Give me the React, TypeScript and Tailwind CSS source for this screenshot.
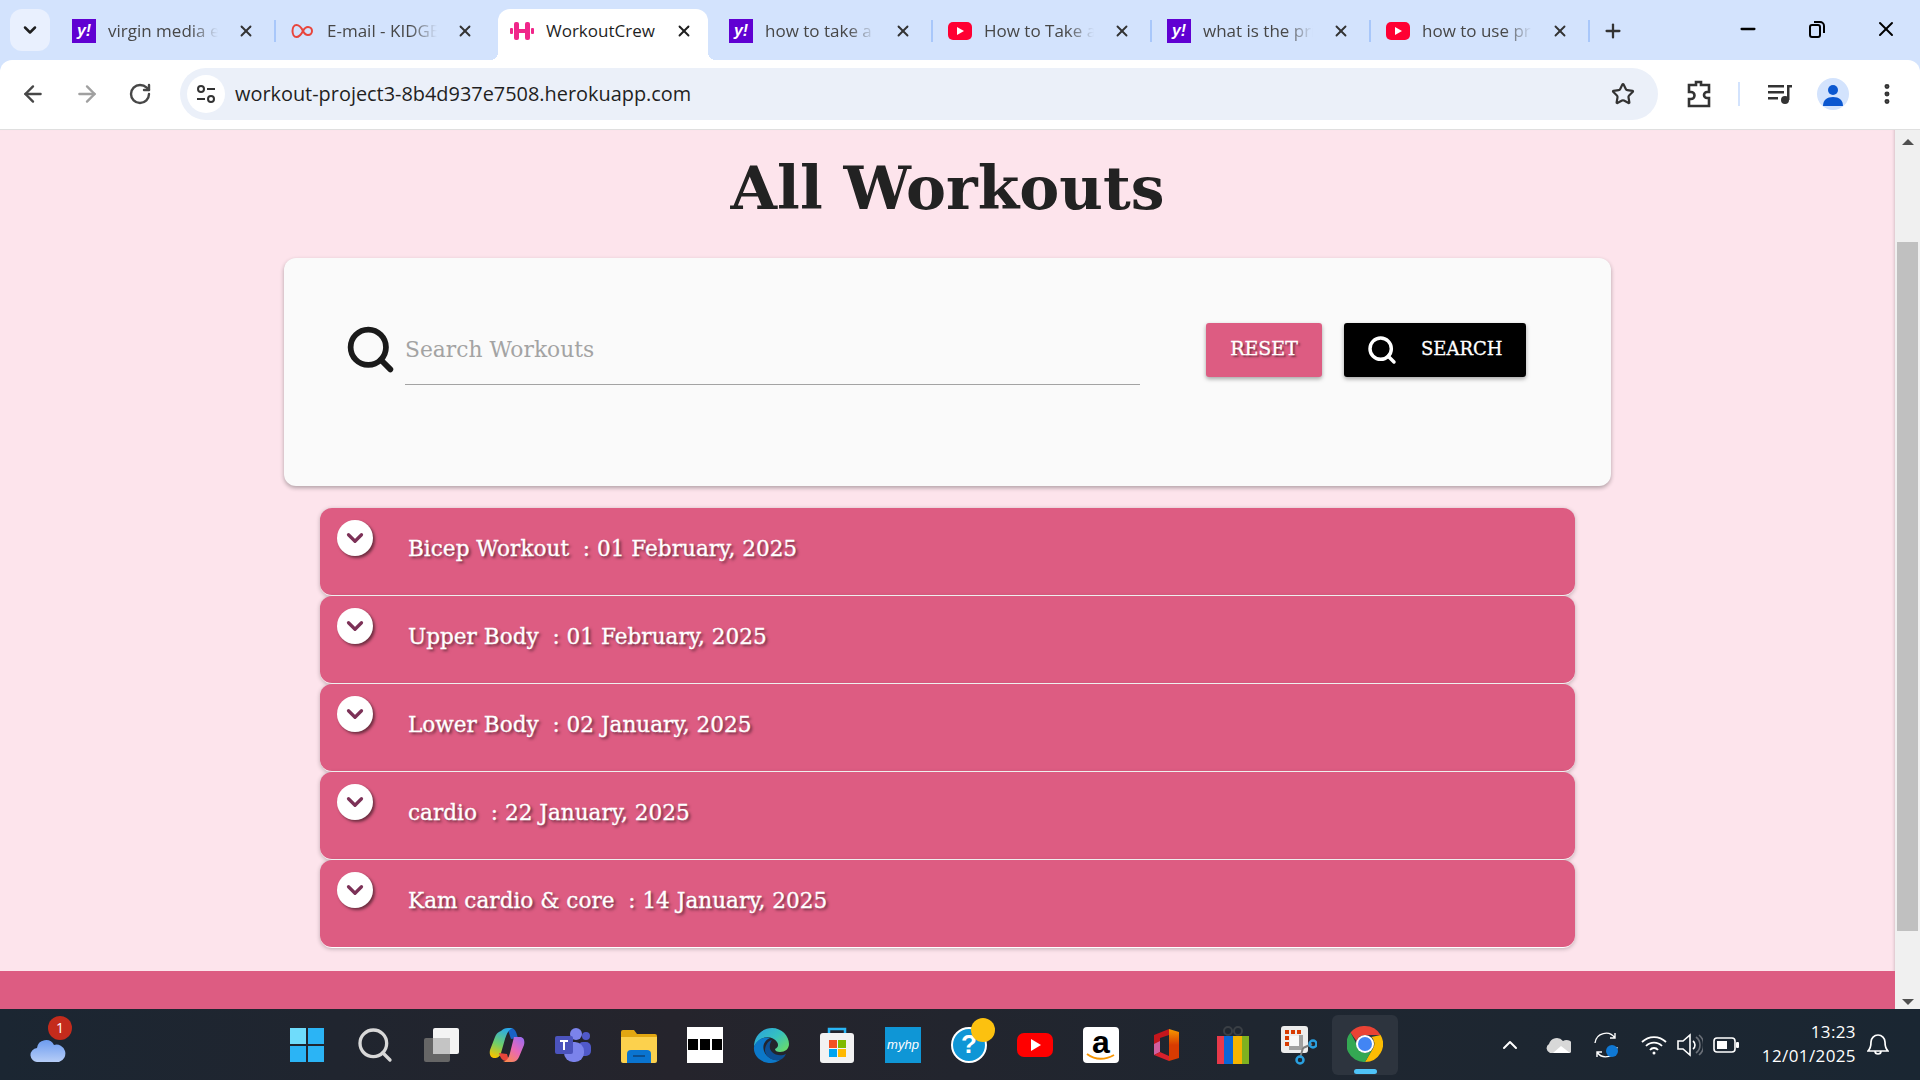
import { ReactNode } from 'react';
import { ArrowLeft, ArrowRight, ChevronDown, ChevronUp, Minus, MoreVertical, Plus, RotateCw, Search, Star, X } from 'lucide-react';

const Yahoo = () => (
  <span className="flex h-6 w-6 shrink-0 items-center justify-center bg-[#6001d2] font-['Liberation_Sans',sans-serif] text-[16px] font-bold italic leading-none text-white">
    y!
  </span>
);

const YouTube = () => (
  <span className="flex h-[18px] w-6 shrink-0 items-center justify-center rounded-[5px] bg-[#ff0033]">
    <span className="ml-px h-0 w-0 border-y-[4px] border-l-[7px] border-y-transparent border-l-white" />
  </span>
);

const Virgin = () => (
  <svg width="24" height="24" viewBox="0 0 24 24" fill="none" stroke="#e8453c" strokeWidth="2" className="shrink-0">
    <path d="M12 12c-2-4-4-6-6.500-6C3 6 1.500 9 1.500 12s1.500 6 4 6c2.500 0 4.500-2 6.500-6 1.500-3 3-4 5-4 2.500 0 4 2 4 4s-1.500 4-4 4c-2 0-3.500-1-5-4z" />
  </svg>
);

const Dumbbell = () => (
  <svg width="24" height="24" viewBox="0 0 24 24" fill="#f0268a" className="shrink-0">
    <rect x="0" y="9" width="3" height="6" rx="1" />
    <rect x="4" y="3" width="5" height="18" rx="2" />
    <rect x="9" y="10" width="6" height="4" />
    <rect x="15" y="3" width="5" height="18" rx="2" />
    <rect x="21" y="9" width="3" height="6" rx="1" />
  </svg>
);

const tabs = [
  { title: 'virgin media email', icon: <Yahoo />, sep: true },
  { title: 'E-mail - KIDGE', icon: <Virgin />, sep: false },
  { title: 'WorkoutCrew', icon: <Dumbbell />, active: true, sep: false },
  { title: 'how to take a screenshot', icon: <Yahoo />, sep: true },
  { title: 'How to Take a Screenshot', icon: <YouTube />, sep: true },
  { title: 'what is the price', icon: <Yahoo />, sep: true },
  { title: 'how to use print', icon: <YouTube />, sep: true },
];

const workouts = [
  'Bicep Workout  : 01 February, 2025',
  'Upper Body  : 01 February, 2025',
  'Lower Body  : 02 January, 2025',
  'cardio  : 22 January, 2025',
  'Kam cardio & core  : 14 January, 2025',
];

const TabStrip = () => (
  <div className="flex h-[60px] shrink-0 items-end bg-[#d3e3fd]">
    <div className="mb-[9px] ml-[10px] mr-[10px] flex h-[42px] w-[40px] items-center justify-center rounded-[12px] bg-[#e9f0fe]">
      <ChevronDown size={20} strokeWidth={3} className="text-[#1f1f1f]" />
    </div>
    {tabs.map((tab) =>
      tab.active ? (
        <div key={tab.title} className="relative mr-[9px] flex h-[51px] w-[210px] items-center rounded-t-[12px] bg-white pb-[7px] pl-3 pr-[15px] text-[#1f1f1f]">
          <span className="absolute -right-2 bottom-0 h-2 w-2 bg-[radial-gradient(circle_at_100%_0,transparent_8px,white_8px)]" />
          <span className="absolute -left-2 bottom-0 h-2 w-2 bg-[radial-gradient(circle_at_0_0,transparent_8px,white_8px)]" />
          {tab.icon}
          <span className="ml-3 flex-1 whitespace-nowrap text-[17px]">{tab.title}</span>
          <X size={18} strokeWidth={2.5} />
        </div>
      ) : (
        <div key={tab.title} className="flex h-[50px] w-[219px] items-center pb-[8px] pl-3 text-[#474747]">
          {tab.icon}
          <span className="ml-3 w-[110px] overflow-hidden whitespace-nowrap text-[17px] [mask-image:linear-gradient(to_right,black_75%,transparent)]">
            {tab.title}
          </span>
          <X size={18} strokeWidth={2.5} className="ml-[19px] text-[#333333]" />
          <span className={`ml-[19px] h-[22px] w-[2px] ${tab.sep ? 'bg-[#a8c7fa]' : 'bg-transparent'}`} />
        </div>
      ),
    )}
    <div className="mb-[15px] flex h-[28px] w-[40px] items-center justify-center">
      <Plus size={22} strokeWidth={2.5} className="text-[#333333]" />
    </div>
    <div className="mb-[19px] ml-auto flex items-center text-black">
      <Minus size={22} strokeWidth={2.5} className="mr-[48px]" />
      <svg width="20" height="20" viewBox="0 0 20 20" fill="none" stroke="currentColor" strokeWidth="2" className="mr-[47px]">
        <rect x="3" y="6" width="10" height="12" rx="2" />
        <path d="M7 3h6a4 4 0 0 1 4 4v7" />
      </svg>
      <X size={24} strokeWidth={2} className="mr-[22px]" />
    </div>
  </div>
);

const Toolbar = () => (
  <div className="flex h-[70px] shrink-0 items-center rounded-t-[12px] border-b border-[#dfdfdf] bg-white pb-px">
    <div className="flex items-center gap-[28px] pl-[20px] pr-[28px] text-[#474747]">
      <ArrowLeft size={26} strokeWidth={2.2} />
      <ArrowRight size={26} strokeWidth={2.2} className="text-[#a0a0a0]" />
      <RotateCw size={24} strokeWidth={2.4} />
    </div>
    <div className="flex h-[52px] w-[1478px] items-center rounded-full bg-[#ebf0f9] pl-[7px] pr-[23px]">
      <span className="flex h-[38px] w-[38px] items-center justify-center rounded-full bg-white">
        <svg width="22" height="22" viewBox="0 0 22 22" fill="none" stroke="#333333" strokeWidth="2">
          <circle cx="6" cy="6" r="3" />
          <path d="M12 6h8M2 16h8" />
          <circle cx="16" cy="16" r="3" />
        </svg>
      </span>
      <span className="ml-[10px] flex-1 text-[19.900px] text-[#1f1f1f]">workout-project3-8b4d937e7508.herokuapp.com</span>
      <Star size={24} strokeWidth={2.2} className="text-[#333333]" />
    </div>
    <svg width="26" height="30" viewBox="0 0 26 30" fill="none" stroke="#333333" strokeWidth="2.6" className="ml-[28px]">
      <path d="M3 6h7V3h5v3h8v7h-2a3 3 0 0 0 0 6h2v8H3v-7h2a3.500 3.500 0 0 0 0-7H3z" />
    </svg>
    <span className="ml-[26px] h-[24px] w-[2px] bg-[#d3e3fd]" />
    <svg width="26" height="22" viewBox="0 0 26 22" className="ml-[27px]" fill="#333333">
      <rect x="1" y="2" width="16" height="2.500" />
      <rect x="1" y="8" width="16" height="2.500" />
      <rect x="1" y="14" width="10" height="2.500" />
      <rect x="20" y="2" width="2.500" height="15" />
      <rect x="20" y="2" width="5" height="2.500" />
      <circle cx="18" cy="17" r="4" />
    </svg>
    <span className="ml-[24px] flex h-[32px] w-[32px] items-center justify-center overflow-hidden rounded-full bg-[#d3e3fd]">
      <svg width="22" height="24" viewBox="0 0 22 24" fill="#0b57d0">
        <circle cx="11" cy="8" r="5" />
        <path d="M1 24c0-6 4-9 10-9s10 3 10 9z" />
      </svg>
    </span>
    <MoreVertical size={26} strokeWidth={2.6} className="ml-[25px] text-[#333333]" />
  </div>
);

const WorkoutRow = ({ text }: { text: string }) => (
  <div className="flex h-[88px] items-start rounded-[12px] border-b border-white bg-[#dd5c82] pl-[17px] shadow-[0_1px_4px_rgba(0,0,0,0.25)]">
    <span className="mt-3 flex h-[36px] w-[36px] items-center justify-center rounded-full bg-white shadow-[2px_2px_3px_rgba(0,0,0,0.5)]">
      <ChevronDown size={26} strokeWidth={3} className="text-[#7c3157]" />
    </span>
    <span className="ml-[35px] mt-[27px] whitespace-pre font-['DejaVu_Serif',serif] text-[21.600px] leading-[28px] text-white [-webkit-text-stroke:0.3px_white] [text-shadow:2px_2px_3px_rgba(0,0,0,0.55)]">
      {text}
    </span>
  </div>
);

const Page = () => (
  <div className="flex min-h-0 flex-1">
    <div className="flex flex-1 flex-col items-center bg-[#fde4ec] shadow-[inset_-3px_0_3px_-2px_rgba(0,0,0,0.15)]">
      <h1 className="mt-[24px] h-[104px] font-['DejaVu_Serif',serif] text-[60px] font-bold leading-[68px] text-[#222222]">All Workouts</h1>
      <div className="flex h-[228px] w-[1327px] items-start rounded-[12px] bg-[#fafafa] pl-[60px] pr-[85px] pt-[65px] shadow-[0_2px_4px_rgba(0,0,0,0.3)]">
        <Search size={53} strokeWidth={2.6} className="shrink-0 text-[#1a1a1a]" />
        <input
          placeholder="Search Workouts"
          className="ml-[8px] mt-[3px] h-[59px] w-[735px] border-b border-[#a3a3a3] bg-transparent pb-[11px] font-['DejaVu_Serif',serif] text-[21.800px] outline-none placeholder:text-[#a3a3a3]"
        />
        <button className="ml-[66px] h-[54px] w-[116px] rounded-[3px] bg-[#dd5c82] pb-[4px] font-['DejaVu_Serif',serif] text-[19px] text-white shadow-[0_2px_4px_rgba(0,0,0,0.35)] [-webkit-text-stroke:0.3px_white] [text-shadow:2px_2px_2px_rgba(0,0,0,0.5)]">
          RESET
        </button>
        <button className="ml-[22px] flex h-[54px] w-[182px] items-center rounded-[3px] bg-black pl-[22px] font-['DejaVu_Serif',serif] text-[18px] text-white shadow-[0_2px_4px_rgba(0,0,0,0.35)] [-webkit-text-stroke:0.3px_white]">
          <Search size={32} strokeWidth={2.6} />
          <span className="mb-[4px] ml-[23px]">SEARCH</span>
        </button>
      </div>
      <div className="mt-[22px] flex w-[1255px] flex-col">
        {workouts.map((w) => (
          <WorkoutRow key={w} text={w} />
        ))}
      </div>
      <div className="mt-auto h-[38px] w-full bg-[#dd5c82]" />
    </div>
    <div className="flex w-[25px] shrink-0 flex-col items-center bg-[#f0f0f0]">
      <span className="mt-[9px] h-0 w-0 border-x-[6px] border-b-[6px] border-x-transparent border-b-[#505050]" />
      <span className="mt-[97px] h-[689px] w-[21px] bg-[#c0c0c0]" />
      <span className="mt-[68px] h-0 w-0 border-x-[6px] border-t-[6px] border-x-transparent border-t-[#505050]" />
    </div>
  </div>
);

const Slot = ({ children, active }: { children: ReactNode; active?: boolean }) => (
  <div className={`relative flex h-[60px] w-[66px] items-center justify-center rounded-[6px] ${active ? 'bg-[#2d343e]' : ''}`}>
    {children}
    {active && <span className="absolute bottom-[1px] h-[5px] w-[23px] rounded-full bg-[#4fc3f7]" />}
  </div>
);

const Taskbar = () => (
  <div className="flex h-[71px] shrink-0 items-center bg-[linear-gradient(90deg,#1b2632,#25242c_35%,#1f2630_65%,#1a2632)] text-white">
    <div className="relative ml-[30px] w-[246px]">
      <svg width="36" height="26" viewBox="0 0 36 26" className="mt-[8px]">
        <defs>
          <linearGradient id="wx" x1="0" y1="0" x2="0" y2="1">
            <stop offset="0" stopColor="#6d9cf0" />
            <stop offset="1" stopColor="#b6cdf7" />
          </linearGradient>
        </defs>
        <path d="M8 26a7 7 0 0 1-1-14 9 9 0 0 1 17-3 8 8 0 0 1 5 17z" fill="url(#wx)" />
      </svg>
      <span className="absolute left-[18px] top-[-12px] flex h-[24px] w-[24px] items-center justify-center rounded-full bg-[#c42b1c] font-['Open_Sans',sans-serif] text-[14px]">1</span>
    </div>
    <div className="flex items-center">
      <Slot>
        <svg width="36" height="36" viewBox="0 0 36 36" className="-ml-[4px]">
          <path d="M1 1h16v16H1zM19 1h16v16H19zM1 19h16v16H1zM19 19h16v16H19z" fill="#2bb4f5" />
          <path d="M1 1h16v16H1z" fill="#6fdcfb" />
        </svg>
      </Slot>
      <Slot>
        <Search size={40} strokeWidth={2} className="text-[#d8d8d8]" />
      </Slot>
      <Slot>
        <svg width="36" height="36" viewBox="0 0 36 36">
          <rect x="10" y="1" width="26" height="26" rx="2" fill="#f4f4f4" />
          <rect x="1" y="11" width="26" height="24" rx="2" fill="#666666" />
          <rect x="10" y="11" width="17" height="16" fill="#c4c4c4" />
        </svg>
      </Slot>
      <Slot>
        <svg width="36" height="36" viewBox="0 0 36 36">
          <defs>
            <linearGradient id="cp1" x1="0.6" y1="0" x2="0.3" y2="1">
              <stop offset="0" stopColor="#2aa7e8" />
              <stop offset="0.55" stopColor="#6fd06a" />
              <stop offset="1" stopColor="#f5c400" />
            </linearGradient>
            <linearGradient id="cp2" x1="0.9" y1="0" x2="0.2" y2="1">
              <stop offset="0" stopColor="#9a6cf0" />
              <stop offset="0.5" stopColor="#e868b8" />
              <stop offset="1" stopColor="#fb8a50" />
            </linearGradient>
          </defs>
          <path d="M19 1h3c3 0 5 3 6 7l1 3-7 1-3-9z" fill="#1a62c4" />
          <path d="M12 4c2-2 4-3 7-3h5c-4 1-6 5-8 11l-4 14c-1 4-4 5-6 5-4 0-6-3-5-8L6 10c1-3 3-5 6-6z" fill="url(#cp1)" />
          <path d="M10 26l8 1 2 7h-3c-3 0-6-3-7-8z" fill="#e8463a" />
          <path d="M25 10h6c4 0 5 4 4 8l-5 12c-1 3-4 5-7 5h-9c4-1 6-5 7-9z" fill="url(#cp2)" />
        </svg>
      </Slot>
      <Slot>
        <svg width="38" height="36" viewBox="0 0 38 36">
          <circle cx="22" cy="7" r="6" fill="#7b83eb" />
          <circle cx="32" cy="9" r="4" fill="#5059c9" />
          <rect x="24" y="15" width="13" height="14" rx="5" fill="#5059c9" />
          <rect x="10" y="15" width="20" height="20" rx="9" fill="#7b83eb" />
          <rect x="1" y="9" width="18" height="18" rx="2" fill="#4b53bc" />
          <path d="M6 13h8v2h-3v8H9v-8H6z" fill="#ffffff" />
        </svg>
      </Slot>
      <Slot>
        <svg width="36" height="36" viewBox="0 0 36 36">
          <path d="M0 5a2 2 0 0 1 2-2h11l3 4h18a2 2 0 0 1 2 2v25H0z" fill="#e2a712" />
          <path d="M0 10h36v24a2 2 0 0 1-2 2H2a2 2 0 0 1-2-2z" fill="#fcd14d" />
          <path d="M6 36v-9a4 4 0 0 1 4-4h16a4 4 0 0 1 4 4v9z" fill="#0a74d0" />
          <rect x="12" y="28" width="12" height="2" fill="#0c4f8f" />
        </svg>
      </Slot>
      <Slot>
        <div className="flex h-[36px] w-[36px] items-center justify-center gap-[2px] bg-white">
          <span className="h-[11px] w-[10px] bg-black" />
          <span className="h-[11px] w-[10px] bg-black" />
          <span className="h-[11px] w-[10px] bg-black" />
        </div>
      </Slot>
      <Slot>
        <svg width="36" height="36" viewBox="0 0 36 36">
          <defs>
            <linearGradient id="edge" x1="0" y1="0" x2="1" y2="0.8">
              <stop offset="0" stopColor="#2a9fe0" />
              <stop offset="0.55" stopColor="#35c1c0" />
              <stop offset="1" stopColor="#68d96b" />
            </linearGradient>
          </defs>
          <path d="M1 20C1 8 10 1 19 1c10 0 17 8 17 16 0 5-4 8-9 8-3 0-5-1-5-3 3-1 4-4 2-7-3-5-11-6-16-3-3 2-6 5-7 8z" fill="url(#edge)" />
          <path d="M1 20c2-7 10-11 16-9-5 2-8 7-6 13 2 6 9 10 16 9-3 2-6 3-9 3C8 36 0 29 1 20z" fill="#0c78c9" />
          <path d="M12 24c0-6 3-10 7-11-3 4-3 9 0 12 4 4 10 4 14 2-2 4-5 6-7 6-7 1-13-3-14-9z" fill="#0d4f94" />
        </svg>
      </Slot>
      <Slot>
        <svg width="36" height="36" viewBox="0 0 36 36">
          <path d="M10 7V2h16v5" fill="none" stroke="#29b6f6" strokeWidth="2.500" />
          <rect x="1" y="6" width="34" height="30" rx="3" fill="#f2f2f2" />
          <rect x="10" y="13" width="8" height="8" fill="#f25022" />
          <rect x="19" y="13" width="8" height="8" fill="#7fba00" />
          <rect x="10" y="22" width="8" height="8" fill="#00a4ef" />
          <rect x="19" y="22" width="8" height="8" fill="#ffb900" />
        </svg>
      </Slot>
      <Slot>
        <div className="flex h-[36px] w-[36px] items-center justify-center bg-[#0f96d6] font-['Liberation_Sans',sans-serif] text-[13px] italic text-white">myhp</div>
      </Slot>
      <Slot>
        <div className="relative flex h-[36px] w-[36px] items-center justify-center rounded-full border-2 border-white bg-[#0f96d6] font-['Liberation_Sans',sans-serif] text-[26px] font-bold text-white">
          ?
          <span className="absolute -right-[10px] -top-[11px] h-[24px] w-[24px] rounded-full bg-[#fcc10f]" />
        </div>
      </Slot>
      <Slot>
        <span className="flex h-[24px] w-[36px] items-center justify-center rounded-[7px] bg-[#ff0000]">
          <span className="ml-px h-0 w-0 border-y-[6px] border-l-[10px] border-y-transparent border-l-white" />
        </span>
      </Slot>
      <Slot>
        <div className="relative flex h-[36px] w-[36px] items-start justify-center rounded-[4px] bg-white font-['Liberation_Sans',sans-serif] text-[32px] font-bold leading-[30px] text-black">
          a
          <svg width="30" height="10" viewBox="0 0 30 10" fill="none" stroke="#f79400" strokeWidth="2" className="absolute bottom-[1px] left-[3px]">
            <path d="M1 2c8 6 18 6 27 1" />
          </svg>
        </div>
      </Slot>
      <Slot>
        <svg width="30" height="36" viewBox="0 0 30 36">
          <defs>
            <linearGradient id="off" x1="0" y1="0" x2="0" y2="1">
              <stop offset="0" stopColor="#f59a00" />
              <stop offset="0.5" stopColor="#d83b01" />
            </linearGradient>
          </defs>
          <path d="M17 2l10 3v26l-10 3z" fill="url(#off)" />
          <path d="M2 8l15-6v6L8 11v14l-6 3z" fill="#c4161c" />
          <path d="M2 17l6-3v11l-6 3z" fill="#d0609f" />
          <path d="M2 28l6-3 9 4v5z" fill="#d8202c" />
        </svg>
      </Slot>
      <Slot>
        <svg width="32" height="38" viewBox="0 0 32 38">
          <circle cx="11" cy="5" r="4" fill="none" stroke="#3a3f45" strokeWidth="2" />
          <circle cx="21" cy="5" r="4" fill="none" stroke="#3a3f45" strokeWidth="2" />
          <rect x="0" y="10" width="7" height="28" fill="#e8394a" />
          <rect x="7" y="10" width="9" height="28" fill="#0a66d6" />
          <rect x="16" y="10" width="9" height="28" fill="#f4b400" />
          <rect x="25" y="10" width="7" height="28" fill="#7fb11f" />
        </svg>
      </Slot>
      <Slot>
        <svg width="36" height="40" viewBox="0 0 36 40">
          <rect x="0" y="1" width="27" height="27" rx="3" fill="#ececec" />
          <path d="M4 5h4v4H4zM10 5h4v4h-4zM16 5h4v4h-4zM4 11h4v4H4zM4 17h4v4H4z" fill="#d83b01" />
          <path d="M9 11h11v11H9z" fill="#f8f8f8" />
          <path d="M8 23h14M20 10v14" stroke="#a0a0a0" strokeWidth="4" fill="none" />
          <path d="M22 23l9-4M22 23l-3 10" stroke="#7c7c7c" strokeWidth="2" fill="none" />
          <circle cx="32" cy="19" r="3.500" fill="none" stroke="#29a0e0" strokeWidth="2.500" />
          <circle cx="19" cy="35" r="3.500" fill="none" stroke="#29a0e0" strokeWidth="2.500" />
        </svg>
      </Slot>
      <Slot active>
        <svg width="36" height="36" viewBox="0 0 36 36" className="mb-[2px]">
          <path d="M18 0a18 18 0 0 1 15.600 9H18a9 9 0 0 0-8.500 6L3.500 6.500A18 18 0 0 1 18 0z" fill="#ea4335" />
          <path d="M33.600 9A18 18 0 0 1 18 36l8-13.500A9 9 0 0 0 24.500 11z" fill="#fbbc04" />
          <path d="M3.500 6.500A18 18 0 0 0 18 36l7-12a9 9 0 0 1-15.500-6z" fill="#34a853" />
          <circle cx="18" cy="18" r="9" fill="#ffffff" />
          <circle cx="18" cy="18" r="7" fill="#4285f4" />
        </svg>
      </Slot>
    </div>
    <div className="ml-[100px] flex items-center">
      <ChevronUp size={24} strokeWidth={2} />
      <svg width="26" height="16" viewBox="0 0 26 16" className="ml-[23px]">
        <path d="M5 16a5 5 0 0 1-1-9 8 8 0 0 1 14-3 6 6 0 0 1 7 12z" fill="#d8d8d8" />
        <path d="M8 16l8-7 9 7z" fill="#ffffff" />
      </svg>
      <svg width="26" height="26" viewBox="0 0 26 26" fill="none" stroke="#ffffff" strokeWidth="1.400" className="ml-[22px]">
        <path d="M2 11A11 11 0 0 1 22 6M22 1v5h-5M24 15A11 11 0 0 1 4 20M4 25v-5h5" />
        <circle cx="19" cy="19" r="6" fill="#0f78d4" stroke="none" />
      </svg>
      <svg width="26" height="20" viewBox="0 0 26 20" fill="none" stroke="#ffffff" strokeWidth="1.800" className="ml-[22px]">
        <path d="M1 7a17 17 0 0 1 24 0M5 11a11 11 0 0 1 16 0M9 15a5 5 0 0 1 8 0" />
        <circle cx="13" cy="18" r="1.500" fill="#ffffff" stroke="none" />
      </svg>
      <svg width="26" height="24" viewBox="0 0 26 24" fill="none" stroke="#ffffff" strokeWidth="1.600" className="ml-[10px]">
        <path d="M1 8h5l7-6v20l-7-6H1z" />
        <path d="M16 8a5 5 0 0 1 0 8" />
        <path d="M19 4a10 10 0 0 1 0 16M22 2a13 13 0 0 1 0 20" stroke="#6b7078" />
      </svg>
      <svg width="26" height="16" viewBox="0 0 26 16" className="ml-[10px]">
        <rect x="1" y="1" width="21" height="14" rx="3" fill="none" stroke="#ffffff" strokeWidth="1.600" />
        <rect x="4" y="4" width="10" height="8" fill="#ffffff" />
        <rect x="23" y="5" width="3" height="6" rx="1" fill="#ffffff" />
      </svg>
      <div className="mb-[2px] ml-[24px] flex w-[93px] flex-col items-end whitespace-nowrap font-['Open_Sans',sans-serif] text-[17px] leading-[24px] tracking-[0.4px]">
        <span>13:23</span>
        <span>12/01/2025</span>
      </div>
      <svg width="22" height="24" viewBox="0 0 22 24" fill="none" stroke="#ffffff" strokeWidth="1.700" className="ml-[11px]">
        <path d="M1 18c2-2 3-4 3-9a7 7 0 0 1 14 0c0 5 1 7 3 9zM8 18a3 3 0 0 0 6 0" />
      </svg>
    </div>
  </div>
);

export default function App() {
  return (
    <div className="flex h-[1080px] w-[1920px] flex-col overflow-hidden bg-[#d3e3fd] font-['Open_Sans',sans-serif]">
      <TabStrip />
      <Toolbar />
      <Page />
      <Taskbar />
    </div>
  );
}
